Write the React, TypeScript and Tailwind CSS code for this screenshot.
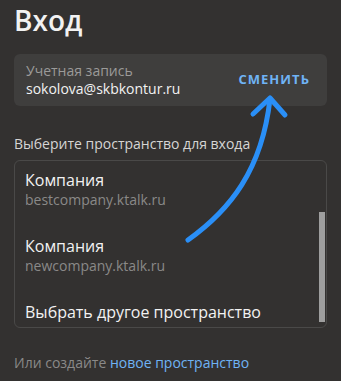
import React from "react";

const spaces = [
  { name: "Компания", host: "bestcompany.ktalk.ru" },
  { name: "Компания", host: "newcompany.ktalk.ru" },
];

export default function App() {
  return (
    <div
      className="relative w-[341px] h-[381px] overflow-hidden bg-[#333130] text-white px-[14px]"
      style={{ fontFamily: '"Open Sans", "Noto Sans", sans-serif' }}
    >
      {/* Title */}
      <h1 className="pt-[2px] text-[28px] leading-[36px] font-semibold text-[#f2f2f2]">Вход</h1>

      {/* Account card */}
      <div className="mt-[16px] h-[52px] rounded-[6px] bg-[#3f3e3d] flex items-center justify-between pl-[12px] pr-[17px]">
        <div className="flex flex-col">
          <span className="text-[14px] leading-[17px] text-[#9b9a99]">Учетная запись</span>
          <span className="text-[14px] leading-[19px] text-[#f2f2f2]">sokolova@skbkontur.ru</span>
        </div>
        <span className="text-[13px] font-bold tracking-[0.08em] text-[#6fb3f5]">СМЕНИТЬ</span>
      </div>

      {/* Space picker */}
      <p className="mt-[28px] text-[14px] leading-[19px] text-[#d6d5d4]">Выберите пространство для входа</p>
      <div className="mt-[7px] h-[168px] rounded-[6px] border border-[#4a4948] relative overflow-hidden">
        <div className="flex flex-col pl-[10px] pt-[9px]">
          {spaces.map((s, i) => (
            <div key={i} className="h-[66px] flex flex-col">
              <span className="text-[16px] leading-[21px] text-[#f2f2f2]">{s.name}</span>
              <span className="text-[14px] leading-[18px] text-[#8a8988]">{s.host}</span>
            </div>
          ))}
          <span className="text-[16px] leading-[21px] text-[#f2f2f2]">Выбрать другое пространство</span>
        </div>
        {/* scrollbar thumb */}
        <div className="absolute right-[1px] top-[51px] w-[6px] h-[110px] bg-[#9e9e9e]" />
      </div>

      <p className="mt-[25px] text-[14px] leading-[19px] text-[#8a8988]">
        Или создайте <span className="text-[#6fb3f5]">новое пространство</span>
      </p>

      {/* annotation arrow */}
      <svg className="absolute inset-0 pointer-events-none" width="341" height="381" viewBox="0 0 341 381">
        <path
          d="M188 240 C230 210 262 170 270 99"
          fill="none"
          stroke="#2a8ff7"
          strokeWidth="5"
          strokeLinecap="round"
        />
        <path
          d="M253 114 L270 98 L285 115"
          fill="none"
          stroke="#2a8ff7"
          strokeWidth="5"
          strokeLinecap="round"
          strokeLinejoin="round"
        />
      </svg>
    </div>
  );
}
